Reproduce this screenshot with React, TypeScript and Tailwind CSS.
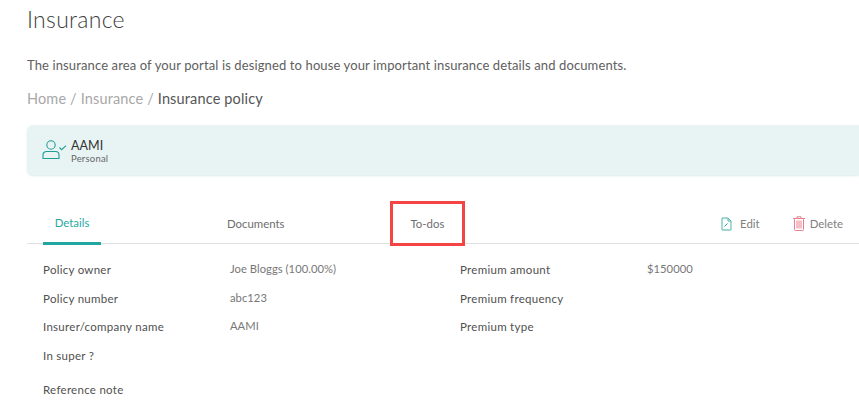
const font = "font-['Lato','Noto_Sans',sans-serif]";

const rows = [
    { label: 'Policy owner', value: 'Joe Bloggs (100.00%)', label2: 'Premium amount', value2: '$150000' },
    { label: 'Policy number', value: 'abc123', label2: 'Premium frequency', value2: '' },
    { label: 'Insurer/company name', value: 'AAMI', label2: 'Premium type', value2: '' },
];

const Label = ({ children }: { children: React.ReactNode }) => (
    <span className="block text-[11.5px] leading-[15px] tracking-[0.28px] text-[#505050]">{children}</span>
);

const Value = ({ children }: { children: React.ReactNode }) => (
    <span className="-mt-px text-[11.2px] leading-[15px] tracking-[0.05px] text-[#777777]">{children}</span>
);

export default function App() {
    return (
        <div className={`${font} relative h-[416px] w-[859px] overflow-hidden bg-white pl-[27px]`}>
            <h1 className="pt-[6px] text-[23px] leading-[27px] font-light tracking-[0.3px] text-[#3d3d3d]">Insurance</h1>

            <p className="mt-[23px] text-[13px] leading-[18px] tracking-[0.12px] text-[#606060]">
                The insurance area of your portal is designed to house your important insurance details and documents.
            </p>

            <div className="mt-[15px] text-[14.5px] leading-[20px] tracking-[0.15px] text-[#a8a8a8]">
                Home / Insurance / <span className="text-[#555555]">Insurance policy</span>
            </div>

            <div className="mt-[16px] flex h-[50px] items-center gap-[3px] rounded-tl-[6px] rounded-bl-[6px] bg-[#e8f4f4] pl-[15px] shadow-[0_1px_2px_rgba(120,170,170,0.25)]">
                <svg width="26" height="22" viewBox="0 0 26 22" fill="none" stroke="#1f9d96" strokeWidth="1.1">
                    <circle cx="9" cy="6" r="4.2" />
                    <path d="M4.5 12.5h9a3.5 3.5 0 0 1 3.5 3.5v3.5h-16v-3.5a3.5 3.5 0 0 1 3-3.5z" />
                    <path d="M17.5 8.5l2.2 2.2 4.3-4" />
                </svg>
                <div className="flex flex-col pt-[2px]">
                    <span className="text-[12.5px] leading-[15px] tracking-[0.1px] text-[#333333]">AAMI</span>
                    <span className="text-[9.5px] leading-[12px] tracking-[0.2px] text-[#666666]">Personal</span>
                </div>
            </div>

            <div className="mt-[27px] flex h-[42px] items-stretch border-b border-[#e2e2e2] pl-[16px] text-[11.4px]">
                <div className="-mb-[2px] flex w-[58px] items-center justify-center border-b-[3px] border-[#22a6a0] pt-[2px] text-[#2aa8a2]">
                    Details
                </div>
                <div className="ml-[126px] flex items-center pt-[2px] text-[#6e6e6e]">Documents</div>
                <div className="ml-[126px] flex items-center pt-[2px] text-[#6e6e6e]">To-dos</div>
                <div className="ml-auto flex items-center pt-[2px] pr-4 text-[#808080]">
                    <svg className="mr-[8px]" width="11" height="14" viewBox="0 0 11 14" fill="none" stroke="#4fb3ad" strokeWidth="1">
                        <path d="M1 1h6l3 3v9H1z" />
                        <path d="M7 1v3h3" />
                        <path d="M3.5 9.5l3-3" stroke="#1f9d96" />
                        <path d="M1 13h9" strokeWidth="1.5" stroke="#9fd5d1" />
                    </svg>
                    <span>Edit</span>
                    <svg className="mr-[5px] ml-[33px]" width="12" height="15" viewBox="0 0 12 15" fill="none" stroke="#e97f8d" strokeWidth="1">
                        <path d="M0 2.5h12M4 2.5V0.8h4v1.7" />
                        <rect x="1.5" y="2.5" width="9" height="12" rx="1" />
                        <path d="M4 4.5v8M6 4.5v8M8 4.5v8" />
                    </svg>
                    <span>Delete</span>
                </div>
            </div>

            <div className="mt-[18px] flex flex-col gap-[13.5px] pl-[16px]">
                {rows.map((row) => (
                    <div key={row.label} className="grid grid-cols-[187px_230px_187px_1fr]">
                        <Label>{row.label}</Label>
                        <Value>{row.value}</Value>
                        <Label>{row.label2}</Label>
                        <Value>{row.value2}</Value>
                    </div>
                ))}
                <Label>In super ?</Label>
                <div className="mt-[6px]">
                    <Label>Reference note</Label>
                </div>
            </div>

            {/* highlight box drawn over the To-dos tab */}
            <div className="absolute top-[201px] left-[390px] h-[45px] w-[75px] border-[3px] border-[#f44444]" />
        </div>
    );
}
